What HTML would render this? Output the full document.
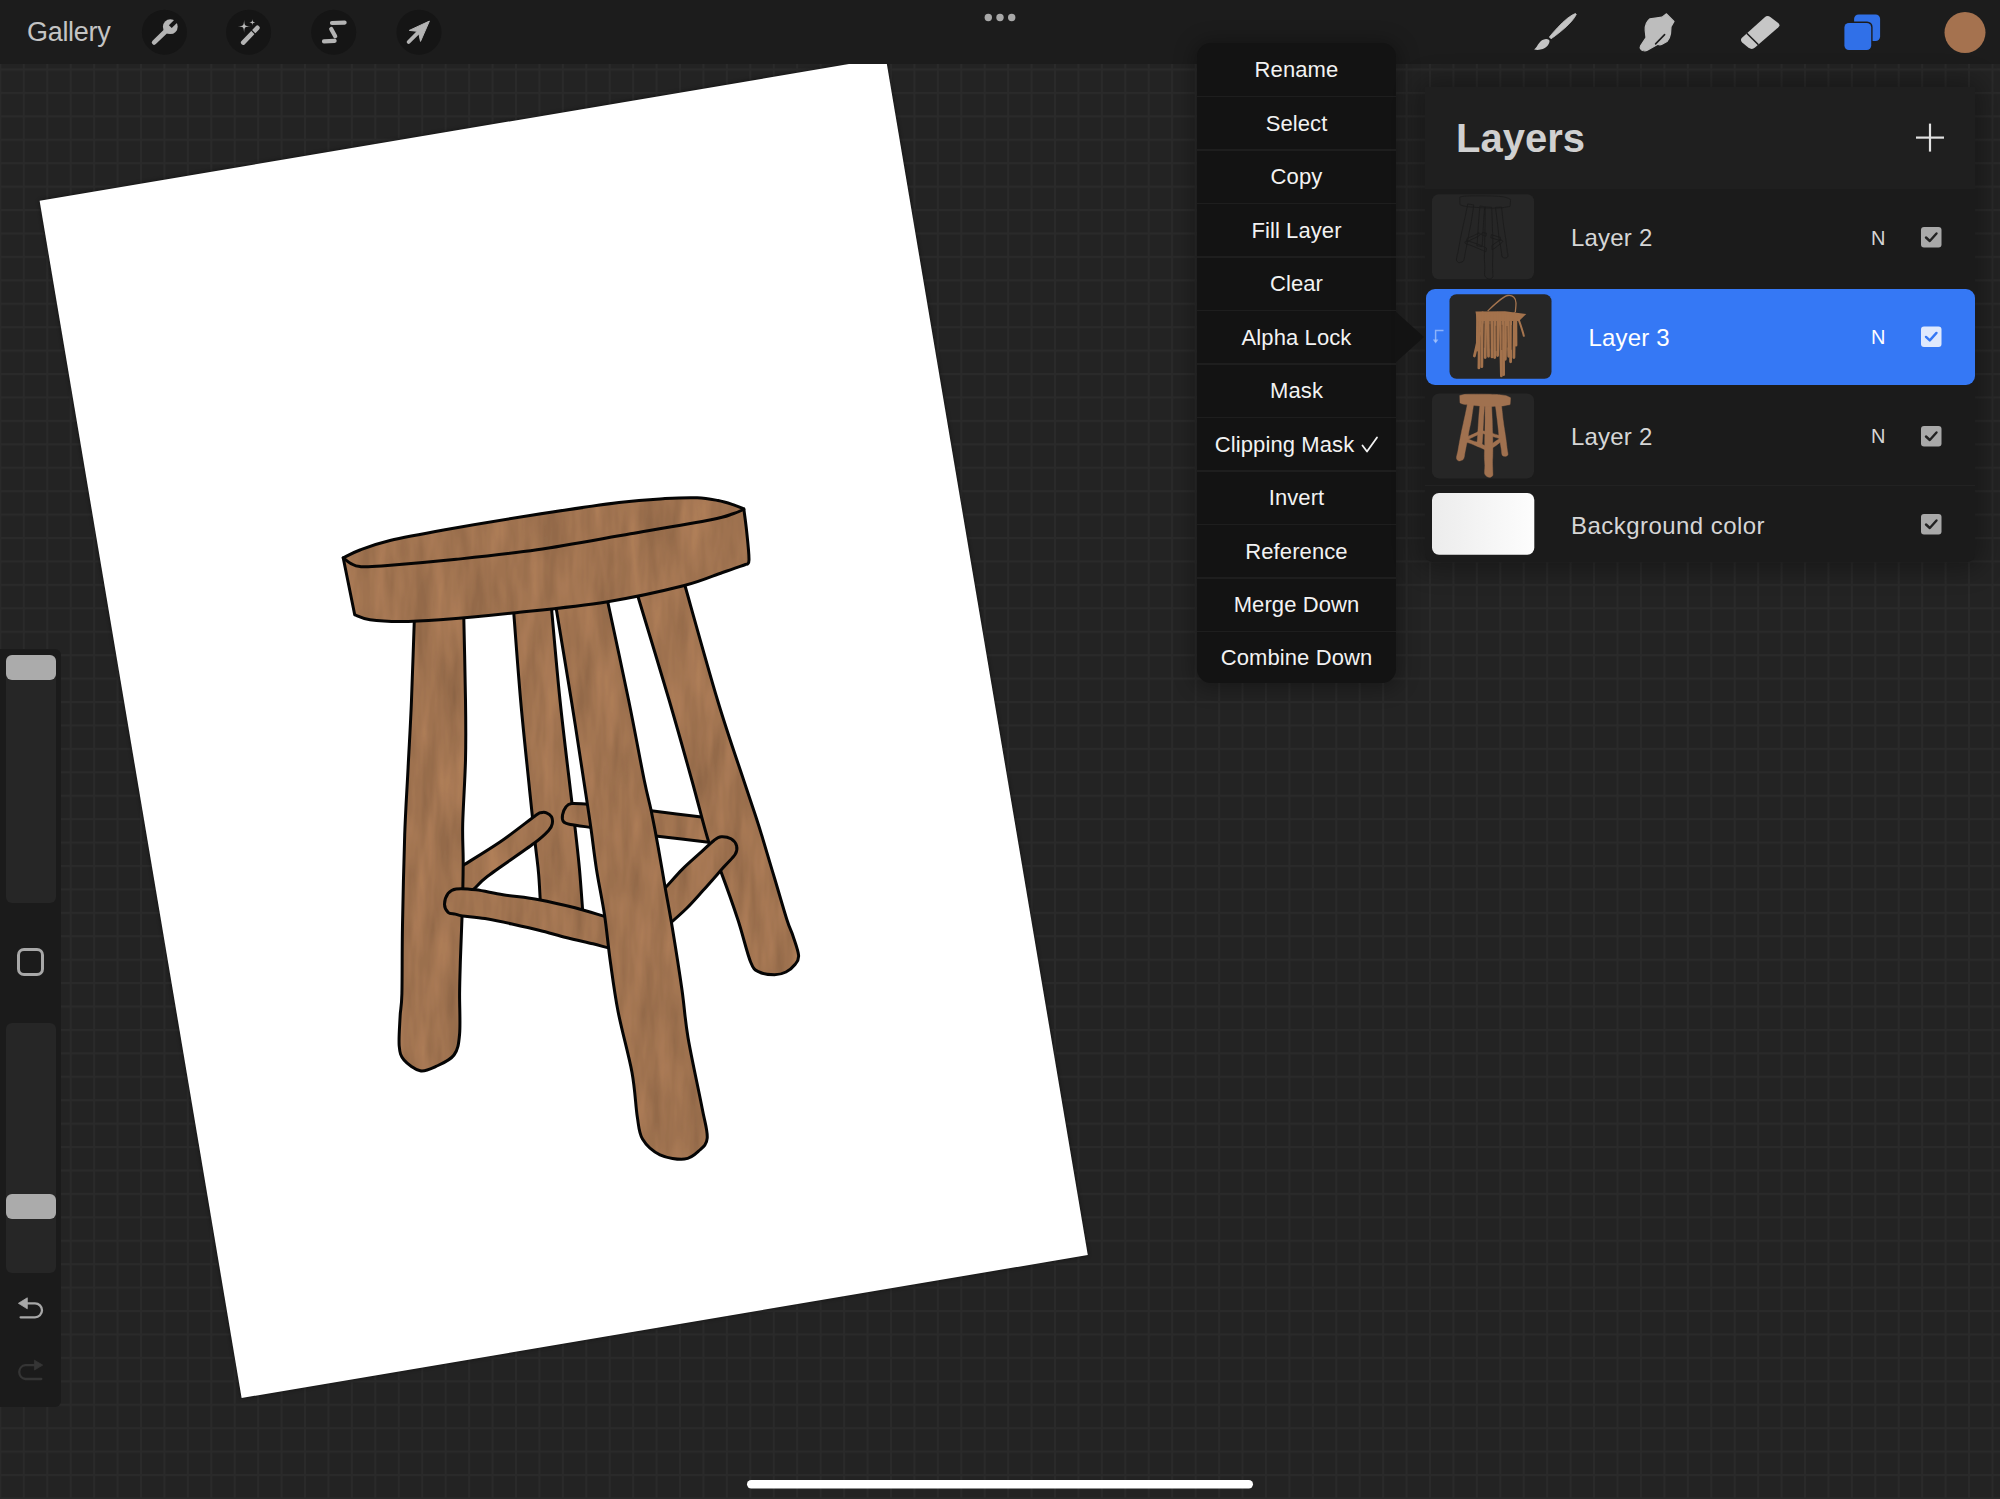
<!DOCTYPE html>
<html><head><meta charset="utf-8">
<style>
html,body{margin:0;padding:0;}
body{width:2000px;height:1499px;overflow:hidden;position:relative;background:#232323;font-family:"Liberation Sans",sans-serif;}
.abs{position:absolute;}
svg.full{position:absolute;left:0;top:0;}
.t{position:absolute;white-space:nowrap;line-height:1;}
.mi{position:absolute;left:1197px;width:199px;text-align:center;color:#f2f2f2;font-size:22px;line-height:1;letter-spacing:0.1px;}
</style></head>
<body>
<svg class="full" width="2000" height="1499" viewBox="0 0 2000 1499">
  <defs>
    <pattern id="grid" patternUnits="userSpaceOnUse" x="-0.64" y="-1.78" width="23.437" height="23.425">
      <rect x="0" y="0" width="2" height="23.425" fill="#2a2a2a"/>
      <rect x="0" y="0" width="23.437" height="2" fill="#2a2a2a"/>
    </pattern>
    <filter id="blur4" x="-20%" y="-20%" width="140%" height="140%"><feGaussianBlur stdDeviation="4"/></filter>
    <filter id="woodtex" x="0" y="0" width="1" height="1" filterUnits="objectBoundingBox">
      <feTurbulence type="fractalNoise" baseFrequency="0.07 0.012" numOctaves="3" seed="11" result="n"/>
      <feColorMatrix in="n" type="matrix" values="1 0 0 0 0  1 0 0 0 0  1 0 0 0 0  0 0 0 0 1" result="g"/>
      <feComposite in="SourceGraphic" in2="g" operator="arithmetic" k1="0.6" k2="0.7" k3="0" k4="0"/>
    </filter>
    <pattern id="woodpat" patternUnits="userSpaceOnUse" x="330" y="480" width="500" height="720">
      <rect x="0" y="0" width="500" height="720" fill="#a07350" filter="url(#woodtex)"/>
    </pattern>
    <filter id="blur2" x="-20%" y="-20%" width="140%" height="140%"><feGaussianBlur stdDeviation="2"/></filter>
  </defs>
  <rect width="2000" height="1499" fill="url(#grid)"/>
  <!-- paper shadow -->
  <polygon points="39.6,200.8 885.8,57.8 1087.8,1255 241.6,1398" fill="#000" opacity="0.5" filter="url(#blur2)"/>
  <!-- paper -->
  <polygon points="39.6,200.8 885.8,57.8 1087.8,1255 241.6,1398" fill="#fff"/>
  <defs><g id="stoolshapes"><path id="leg2" d="M512.8,600.0 C514.1,616.7 517.8,668.3 520.6,700.0 C523.4,731.7 527.2,765.9 529.6,790.0 C532.0,814.1 533.8,830.2 535.3,844.4 C536.8,858.6 537.8,863.2 538.7,875.0 C539.7,886.8 540.6,908.3 541.0,915.0 C548.0,915.0 576.0,915.0 583.0,915.0 C582.4,907.4 580.8,884.0 579.5,869.4 C578.2,854.8 576.5,840.6 575.0,827.4 C573.5,814.2 572.9,811.2 570.4,790.0 C567.9,768.8 563.3,731.7 560.0,700.0 C556.7,668.3 552.3,616.7 550.8,600.0 C544.5,600.0 519.1,600.0 512.8,600.0 Z"/><path id="s3a" d="M600.0,804.5 C597.9,804.5 592.1,804.4 587.4,804.2 C582.7,804.1 575.2,803.1 571.6,803.6 C568.0,804.1 567.4,805.1 565.9,807.0 C564.4,808.9 562.9,812.5 562.5,815.0 C562.1,817.5 562.3,820.2 563.6,821.8 C564.9,823.4 565.9,823.6 570.4,824.5 C574.9,825.4 585.9,826.7 590.8,827.4 C595.7,828.1 598.5,828.3 600.0,828.5 C600.0,824.5 600.0,808.5 600.0,804.5 Z"/><path id="s3b" d="M640.0,810.0 C641.9,810.1 640.9,809.6 651.2,810.8 C661.5,812.0 691.0,815.8 701.6,817.1 C712.2,818.4 712.8,818.3 715.0,818.5 C715.2,822.7 715.8,839.3 716.0,843.5 C714.8,843.3 718.7,843.5 708.6,842.3 C698.5,841.0 666.8,837.4 655.4,836.0 C644.0,834.6 642.6,834.3 640.0,834.0 C640.0,830.0 640.0,814.0 640.0,810.0 Z"/><path id="leg4" d="M636.0,590.0 C641.5,608.3 659.8,668.3 669.1,700.0 C678.4,731.7 685.2,756.4 691.8,780.0 C698.4,803.6 703.7,826.2 708.6,841.6 C713.5,857.0 716.3,859.3 721.2,872.4 C726.1,885.5 733.1,905.1 738.0,920.0 C742.9,934.9 747.1,953.4 750.6,962.0 C754.1,970.6 755.0,969.8 759.0,971.9 C763.0,974.0 770.0,974.7 774.5,974.7 C779.0,974.7 782.6,973.7 786.0,972.0 C789.4,970.3 792.9,967.2 795.0,964.5 C797.1,961.8 798.9,960.2 798.6,955.5 C798.3,950.8 794.9,941.9 793.0,936.0 C791.1,930.1 790.1,929.7 787.0,920.0 C783.9,910.3 778.5,891.3 774.5,878.0 C770.5,864.7 766.2,850.2 763.2,840.2 C760.2,830.2 759.5,827.8 756.2,817.8 C752.9,807.8 750.1,799.6 743.6,780.0 C737.1,760.4 727.5,733.3 717.5,700.0 C707.5,666.7 689.1,600.0 683.4,580.0 C675.5,581.7 643.9,588.3 636.0,590.0 Z"/><path id="s1" d="M455.0,870.0 C456.5,869.1 456.3,869.6 463.8,864.9 C471.3,860.2 488.1,850.1 500.0,842.0 C511.9,833.9 528.2,820.9 535.0,816.0 C541.8,811.1 538.6,813.3 540.5,812.8 C542.4,812.3 544.7,812.1 546.5,812.8 C548.3,813.5 550.5,815.0 551.5,816.8 C552.5,818.6 552.7,821.3 552.3,823.5 C551.9,825.7 552.0,826.7 549.0,830.0 C546.0,833.3 544.3,835.6 534.1,843.3 C523.9,851.0 497.8,868.5 487.6,876.2 C477.4,884.0 478.3,885.8 472.9,889.8 C467.5,893.8 458.0,898.3 455.0,900.0 C455.0,895.0 455.0,875.0 455.0,870.0 Z"/><path id="s4" d="M660.0,892.0 C660.9,891.3 661.5,891.5 665.2,887.8 C668.9,884.1 676.4,875.2 682.0,869.6 C687.6,864.0 693.4,859.1 698.8,854.2 C704.2,849.3 710.5,843.1 714.2,840.2 C717.9,837.3 718.4,836.9 721.2,836.7 C724.0,836.5 728.4,837.3 731.0,838.8 C733.6,840.3 735.9,843.2 736.6,845.8 C737.3,848.4 737.3,850.7 735.2,854.2 C733.1,857.7 729.4,860.7 724.0,866.8 C718.6,872.9 709.3,883.6 703.0,890.6 C696.7,897.6 692.4,902.7 686.2,908.8 C680.0,914.9 669.4,924.0 666.0,927.0 C665.0,921.2 661.0,897.8 660.0,892.0 Z"/><path id="leg1" d="M415.0,600.0 C414.4,616.7 412.6,672.1 411.5,700.0 C410.4,727.9 409.2,745.0 408.1,767.5 C407.0,790.0 405.6,808.8 404.7,835.0 C403.8,861.2 403.0,898.5 402.5,925.0 C402.0,951.5 402.3,978.5 401.9,993.8 C401.5,1009.0 400.5,1007.8 400.1,1016.5 C399.7,1025.2 398.6,1038.8 399.2,1046.0 C399.9,1053.2 400.5,1055.9 404.0,1060.0 C407.5,1064.1 414.9,1069.7 420.2,1070.8 C425.6,1071.8 430.4,1069.0 436.0,1066.4 C441.6,1063.8 450.1,1060.4 454.0,1055.0 C457.9,1049.6 458.7,1044.2 459.6,1034.0 C460.5,1023.8 459.5,1006.1 459.6,993.8 C459.7,981.4 460.0,973.2 460.4,960.0 C460.8,946.8 461.6,930.8 462.1,914.8 C462.6,898.8 463.1,878.8 463.2,863.7 C463.3,848.6 462.3,841.3 462.7,824.0 C463.1,806.7 465.0,780.7 465.5,760.0 C466.0,739.3 465.9,726.7 465.5,700.0 C465.1,673.3 463.8,616.7 463.4,600.0 C455.3,600.0 423.1,600.0 415.0,600.0 Z"/><path id="s2" d="M448.1,893.4 C450.1,890.8 451.6,889.5 456.2,888.9 C460.8,888.3 468.2,888.8 476.0,889.8 C483.8,890.8 492.5,893.1 503.0,894.8 C513.5,896.4 527.0,897.5 539.0,899.7 C551.0,901.9 564.0,905.0 575.0,907.8 C586.0,910.6 597.2,914.2 604.7,916.4 C612.2,918.6 617.5,920.2 620.0,921.0 C620.0,925.8 620.0,945.2 620.0,950.0 C618.0,949.6 612.8,948.9 608.3,947.9 C603.8,946.9 600.0,945.5 593.0,943.8 C586.0,942.1 575.0,939.8 566.0,937.5 C557.0,935.2 548.0,932.5 539.0,930.3 C530.0,928.0 521.0,926.0 512.0,924.0 C503.0,922.0 493.2,920.0 485.0,918.6 C476.8,917.2 467.4,916.6 462.5,915.9 C457.6,915.1 457.7,914.7 455.3,914.1 C452.9,913.5 449.9,913.9 448.1,912.3 C446.3,910.6 444.5,907.4 444.5,904.2 C444.5,901.1 446.2,896.0 448.1,893.4 Z"/><path id="leg3" d="M554.8,600.0 C557.5,616.7 566.2,668.3 571.3,700.0 C576.4,731.7 582.0,768.8 585.2,790.0 C588.5,811.2 588.9,814.2 590.8,827.4 C592.7,840.6 594.2,854.8 596.5,869.4 C598.8,884.0 602.2,899.7 604.5,914.8 C606.8,929.9 607.9,943.9 610.1,960.0 C612.4,976.1 614.4,992.5 618.0,1011.2 C621.6,1030.0 628.8,1055.0 632.0,1072.5 C635.2,1090.0 635.5,1105.2 637.2,1116.2 C639.0,1127.3 638.7,1132.6 642.5,1139.0 C646.3,1145.4 653.0,1151.4 660.0,1154.8 C667.0,1158.1 678.1,1159.7 684.5,1159.1 C690.9,1158.5 694.7,1154.8 698.5,1151.2 C702.3,1147.8 706.7,1145.4 707.2,1138.1 C707.8,1130.8 705.2,1124.3 702.0,1107.5 C698.8,1090.7 691.3,1057.1 688.0,1037.5 C684.7,1017.9 684.6,1008.4 682.0,990.0 C679.4,971.6 675.0,944.0 672.2,927.0 C669.4,910.0 667.5,901.1 665.2,887.8 C662.9,874.5 660.5,860.0 658.2,847.2 C655.9,834.4 653.5,822.0 651.2,810.8 C648.9,799.6 648.0,798.5 644.2,780.0 C640.4,761.5 634.9,730.8 628.6,700.0 C622.3,669.2 610.0,612.5 606.3,595.0 C597.7,595.8 563.4,599.2 554.8,600.0 Z"/><path id="seat" d="M343.2,557.8 C346.0,556.5 352.2,552.9 360.0,550.0 C367.8,547.1 375.8,543.9 390.0,540.5 C404.2,537.1 421.7,533.9 445.0,529.7 C468.3,525.5 501.0,520.0 530.0,515.5 C559.0,511.0 596.5,505.4 619.0,502.6 C641.5,499.8 652.0,499.4 665.0,498.6 C678.0,497.8 688.4,497.5 697.2,497.8 C706.0,498.1 712.0,499.4 718.0,500.5 C724.0,501.6 728.7,503.2 733.0,504.6 C737.3,506.0 742.0,508.0 743.8,508.7 C744.2,512.2 745.6,521.5 746.5,530.0 C747.4,538.5 749.2,554.2 749.0,560.0 C748.8,565.8 746.1,563.8 745.5,564.5 C741.7,565.8 732.9,569.0 722.5,572.5 C712.1,576.0 702.8,580.9 683.4,585.8 C664.0,590.7 634.7,597.4 606.3,601.9 C577.9,606.4 540.5,610.0 512.8,613.0 C485.1,616.0 458.8,618.4 440.0,619.8 C421.2,621.2 411.7,621.6 400.0,621.6 C388.3,621.6 377.6,620.9 370.0,619.8 C362.4,618.7 357.2,615.6 354.7,614.8 C352.8,605.3 345.1,567.3 343.2,557.8 Z"/></g><path id="stoolinner" d="M343.2,557.8 C344.5,558.8 348.2,562.1 351.0,563.6 C353.8,565.1 354.9,566.2 360.0,566.6 C365.1,567.0 365.6,567.2 381.7,566.0 C397.8,564.8 430.6,562.0 456.5,559.3 C482.4,556.6 508.0,554.0 537.0,549.8 C566.0,545.5 601.5,538.8 630.5,533.8 C659.5,528.8 693.9,523.0 711.0,519.7 C728.1,516.4 727.5,515.5 733.0,513.8 C738.5,512.1 742.0,510.1 743.8,509.3"/></defs><g><g fill="url(#woodpat)" stroke="#050505" stroke-width="3" stroke-linejoin="round"><use href="#stoolshapes"/></g><use href="#stoolinner" fill="none" stroke="#050505" stroke-width="3" stroke-linecap="round"/></g>
</svg>

<!-- top bar -->
<div class="abs" style="left:0;top:0;width:2000px;height:64px;background:#1c1c1c;"></div>
<div class="t" style="left:27px;top:19px;font-size:27px;letter-spacing:-0.3px;color:#c4c4c4;">Gallery</div>

<svg class="full" width="2000" height="1499" viewBox="0 0 2000 1499" style="pointer-events:none">
  <!-- toolbar circles -->
  <g fill="#151515">
    <circle cx="164.4" cy="32.2" r="22.5"/>
    <circle cx="248.6" cy="32.2" r="22.5"/>
    <circle cx="333.7" cy="32.2" r="22.5"/>
    <circle cx="419" cy="32.2" r="22.5"/>
  </g>
  <!-- wrench -->
  <line x1="154.2" y1="42.4" x2="167" y2="30" stroke="#b4b4b4" stroke-width="4.8" stroke-linecap="round"/>
  <circle cx="170.3" cy="26.7" r="7.4" fill="#b4b4b4"/>
  <line x1="170.3" y1="26.7" x2="178" y2="19" stroke="#151515" stroke-width="4"/>
  <!-- wand -->
  <g stroke="#b4b4b4" stroke-width="4.6" stroke-linecap="round">
    <line x1="243.2" y1="42.6" x2="257.4" y2="27.8"/>
  </g>
  <path d="M244.10,19.90 C244.60,25.80 244.60,25.80 250.50,26.30 C244.60,26.80 244.60,26.80 244.10,32.70 C243.60,26.80 243.60,26.80 237.70,26.30 C243.60,25.80 243.60,25.80 244.10,19.90 Z" fill="#bababa"/>
  <path d="M252.40,19.10 C252.75,22.05 252.75,22.05 255.70,22.40 C252.75,22.75 252.75,22.75 252.40,25.70 C252.05,22.75 252.05,22.75 249.10,22.40 C252.05,22.05 252.05,22.05 252.40,19.10 Z" fill="#bababa"/>
  <line x1="250.6" y1="29.4" x2="256" y2="34.8" stroke="#151515" stroke-width="1.3"/>
  <!-- selection S -->
  <g stroke="#b4b4b4" stroke-width="4.2" stroke-linecap="round" fill="none">
    <path d="M332,23 L344.6,22.6"/>
    <path d="M331.2,29 L335.2,36.2"/>
    <path d="M324,41.4 L334.6,40.8"/>
  </g>
  <!-- transform arrow -->
  <line x1="408.6" y1="42" x2="418" y2="32.6" stroke="#b4b4b4" stroke-width="3.8" stroke-linecap="round"/>
  <path d="M429.4,21.1 L409.3,30.4 L418.4,31.4 L420.5,41.4 Z" fill="#b4b4b4" stroke="#b4b4b4" stroke-width="1" stroke-linejoin="round"/>
  <!-- brush -->
  <path d="M1551.02,38.78 L1555.35,35.69 L1560.90,31.33 L1566.25,26.75 L1571.18,21.73 L1574.49,17.54 L1576.31,14.34 L1575.49,13.46 L1572.17,15.06 L1567.77,18.07 L1562.42,22.65 L1557.49,27.67 L1552.76,32.91 L1549.38,37.02 Z" fill="#c4c4c4" stroke="#c4c4c4" stroke-width="0.8" stroke-linejoin="round"/>
  <path d="M1546,39.1 C1548,39 1550,40 1549.5,41.8 C1549,44 1548,45.5 1546.5,46.8 C1544,49 1540,50.6 1534.1,49.6 C1536.5,47.5 1537.5,45 1538.8,43.4 C1540.5,41 1543,39.3 1546,39.1 Z" fill="#c4c4c4"/>
  <!-- smudge -->
  <path d="M1646,37.5 L1645.2,30.4 C1645,26 1647,21 1650,18.8 L1662,17.2 L1666.5,13.8 L1674,21.4 L1671,26.6 L1670.5,33.6 C1670,37 1668.5,40 1667,41.5 L1662,44.3 C1660.5,45 1659,45 1657.9,44.2 L1647.3,50.2 C1645.5,51.1 1642.5,51 1641.2,49.6 C1640,48.3 1640,46.8 1640.6,45.8 Z" fill="#bdbdbd" stroke="#bdbdbd" stroke-width="1.2" stroke-linejoin="round"/>
  <line x1="1664.6" y1="34.6" x2="1655.6" y2="43.9" stroke="#1c1c1c" stroke-width="1.6" stroke-linecap="round"/>
  <!-- eraser -->
  <path d="M1742,37.8 L1764.5,17.4 Q1767.4,14.8 1770.3,17 L1778.2,23 Q1780.6,25 1778.4,27.2 L1755,47.6 Q1752,50.2 1748.5,47.8 L1742.2,42.4 Q1739.8,40 1742,37.8 Z" fill="#c6c6c6"/>
  <line x1="1746.8" y1="33.2" x2="1758.4" y2="44.8" stroke="#1c1c1c" stroke-width="1.6"/>
  <!-- dots -->
  <g fill="#a8a8a8">
    <circle cx="988.3" cy="17.5" r="3.7"/>
    <circle cx="1000" cy="17.5" r="3.7"/>
    <circle cx="1011.7" cy="17.5" r="3.7"/>
  </g>
  <!-- color swatch -->
  <circle cx="1965" cy="32.5" r="20.5" fill="#a5724f"/>
  <!-- layers icon -->
  <rect x="1854.1" y="14.4" width="26" height="26.7" rx="4.5" fill="#3070e8"/>
  <rect x="1843" y="21.5" width="29.6" height="30" rx="5.5" fill="#1c1c1c"/>
  <rect x="1844.4" y="22.9" width="26.8" height="27.1" rx="4.5" fill="#3070e8"/>

  <!-- home indicator -->
  <rect x="747" y="1480" width="506" height="8.4" rx="4.2" fill="#fff"/>
</svg>

<!-- left sidebar -->
<div class="abs" style="left:0;top:649px;width:61px;height:758px;background:#1b1b1b;border-radius:0 6px 6px 0;"></div>
<div class="abs" style="left:6px;top:655px;width:50px;height:248px;background:#262626;border-radius:6px;"></div>
<div class="abs" style="left:6px;top:655px;width:50px;height:25px;background:#ababab;border-radius:6px;"></div>
<div class="abs" style="left:6px;top:1023px;width:50px;height:250px;background:#262626;border-radius:6px;"></div>
<div class="abs" style="left:6px;top:1194px;width:50px;height:25px;background:#ababab;border-radius:6px;"></div>
<div class="abs" style="left:17px;top:948px;width:21.4px;height:22px;border:3px solid #a8a8a8;border-radius:7px;"></div>

<svg class="abs" style="left:0;top:1280px" width="61" height="110" viewBox="0 1280 61 110">
  <path d="M26.9,1303.3 H35 A7,7 0 0 1 35,1317.3 H20.6" fill="none" stroke="#a8a8a8" stroke-width="2.3" stroke-linecap="round"/>
  <path d="M18.4,1303.3 L27.3,1297.8 L27.3,1308.8 Z" fill="#a8a8a8" stroke="#a8a8a8" stroke-width="0.8" stroke-linejoin="round"/>
  <path d="M35,1365.1 H25.4 A7,7 0 0 0 25.4,1379 H41.3" fill="none" stroke="#353535" stroke-width="2.3" stroke-linecap="round"/>
  <path d="M42.7,1365.1 L34.4,1360.2 L34.4,1370 Z" fill="#353535" stroke="#353535" stroke-width="0.8" stroke-linejoin="round"/>
</svg>
<!-- menu -->
<div class="abs" style="left:1197px;top:43px;width:199px;height:640px;background:#131313;border-radius:14px;box-shadow:0 2px 20px 4px rgba(0,0,0,0.3);"></div>
<div class="mi" style="top:59.20px">Rename</div><div class="mi" style="top:112.68px">Select</div><div class="mi" style="top:166.16px">Copy</div><div class="mi" style="top:219.64px">Fill Layer</div><div class="mi" style="top:273.12px">Clear</div><div class="mi" style="top:326.60px">Alpha Lock</div><div class="mi" style="top:380.08px">Mask</div><div class="mi" style="top:433.56px;"><span style="position:relative;left:-12px">Clipping Mask</span></div><svg class="abs" style="left:1360px;top:436px" width="20" height="18"><path d="M2.5,9.5 L7,15.5 L17,1.5" fill="none" stroke="#f2f2f2" stroke-width="1.8" stroke-linecap="round" stroke-linejoin="round"/></svg><div class="mi" style="top:487.04px">Invert</div><div class="mi" style="top:540.52px">Reference</div><div class="mi" style="top:594.00px">Merge Down</div><div class="mi" style="top:647.48px">Combine Down</div><div class="abs" style="left:1197px;top:95.7px;width:199px;height:1.5px;background:#1e1e1e"></div><div class="abs" style="left:1197px;top:149.2px;width:199px;height:1.5px;background:#1e1e1e"></div><div class="abs" style="left:1197px;top:202.6px;width:199px;height:1.5px;background:#1e1e1e"></div><div class="abs" style="left:1197px;top:256.1px;width:199px;height:1.5px;background:#1e1e1e"></div><div class="abs" style="left:1197px;top:309.6px;width:199px;height:1.5px;background:#1e1e1e"></div><div class="abs" style="left:1197px;top:363.1px;width:199px;height:1.5px;background:#1e1e1e"></div><div class="abs" style="left:1197px;top:416.6px;width:199px;height:1.5px;background:#1e1e1e"></div><div class="abs" style="left:1197px;top:470.0px;width:199px;height:1.5px;background:#1e1e1e"></div><div class="abs" style="left:1197px;top:523.5px;width:199px;height:1.5px;background:#1e1e1e"></div><div class="abs" style="left:1197px;top:577.0px;width:199px;height:1.5px;background:#1e1e1e"></div><div class="abs" style="left:1197px;top:630.5px;width:199px;height:1.5px;background:#1e1e1e"></div>

<!-- layers panel -->
<div class="abs" style="left:1425px;top:87px;width:550px;height:475px;border-radius:10px;box-shadow:0 0 24px 8px rgba(0,0,0,0.3);"></div>
<div class="abs" style="left:1425px;top:87px;width:550px;height:102px;background:#1f1f1f;"></div>
<div class="abs" style="left:1425px;top:189px;width:550px;height:373px;background:#1b1b1b;border-radius:0 0 8px 8px;"></div>
<div class="t" style="left:1456px;top:118px;font-size:40px;font-weight:bold;color:#d0d0d0;">Layers</div>
<div class="abs" style="left:1425.7px;top:288.5px;width:549.5px;height:96.4px;background:#3578f5;border-radius:9px;"></div>
<svg class="full" width="2000" height="1499" viewBox="0 0 2000 1499">
  <!-- menu arrow -->
  <polygon points="1395,311 1424,337 1395,363" fill="#131313"/>
  <!-- plus -->
  <g stroke="#e2e2e2" stroke-width="2.2"><line x1="1916" y1="137.6" x2="1944" y2="137.6"/><line x1="1930" y1="123.6" x2="1930" y2="151.6"/></g>
  <!-- separators -->
  <rect x="1425" y="485" width="550" height="1.2" fill="#222"/>
  <!-- thumbnails -->
  <rect x="1432" y="194.3" width="102" height="85" rx="7" fill="#262626"/>
  <rect x="1449.5" y="294.3" width="102" height="84.5" rx="7" fill="#262626"/>
  <rect x="1432" y="393.4" width="102" height="85" rx="7" fill="#262626"/>
  <defs><linearGradient id="wg" x1="0" x2="1" y1="0" y2="0"><stop offset="0" stop-color="#ececec"/><stop offset="1" stop-color="#fdfdfd"/></linearGradient></defs>
  <rect x="1432" y="493" width="102.3" height="61.8" rx="7" fill="url(#wg)"/>
  <g transform="translate(1410.4,329.5) scale(0.126) rotate(9.58,570,830)" fill="#a0714f" stroke="#a0714f" stroke-width="3"><use href="#stoolshapes"/></g><g transform="translate(1410.4,131.2) scale(0.126) rotate(9.58,570,830)" fill="none" stroke="#1c1c1c" stroke-width="7"><use href="#stoolshapes"/></g><g><path d="M1475.5,311.5 L1505,311.2 L1526.3,314 L1519,321 L1477,321 Z" fill="#a3724c"/><g stroke="#a3724c" stroke-width="2.8" stroke-linecap="round"><line x1="1477.6" y1="313.7" x2="1477.3" y2="350.0"/><line x1="1479.8" y1="314.8" x2="1478.9" y2="367.9"/><line x1="1482.6" y1="313.0" x2="1481.8" y2="366.7"/><line x1="1485.8" y1="313.7" x2="1485.2" y2="357.5"/><line x1="1488.3" y1="315.5" x2="1488.5" y2="356.3"/><line x1="1491.6" y1="313.5" x2="1492.0" y2="356.9"/><line x1="1494.7" y1="314.6" x2="1494.7" y2="357.5"/><line x1="1497.8" y1="313.2" x2="1497.6" y2="355.6"/><line x1="1500.2" y1="313.9" x2="1501.4" y2="375.9"/><line x1="1503.3" y1="314.4" x2="1503.6" y2="374.7"/><line x1="1506.0" y1="315.1" x2="1505.3" y2="359.3"/><line x1="1507.9" y1="315.4" x2="1508.7" y2="356.3"/><line x1="1510.7" y1="315.6" x2="1510.6" y2="361.8"/><line x1="1514.6" y1="313.7" x2="1513.9" y2="357.5"/><line x1="1515.8" y1="314.9" x2="1516.0" y2="345.2"/><line x1="1474.4" y1="356" x2="1479.7" y2="333"/></g><g stroke="#5a3f2c" stroke-width="1.1" opacity="0.55"><line x1="1484.0" y1="323.5" x2="1483.9" y2="347.7"/><line x1="1490.0" y1="324.3" x2="1490.4" y2="348.5"/><line x1="1496.0" y1="325.7" x2="1496.4" y2="350.9"/><line x1="1502.0" y1="324.7" x2="1501.7" y2="349.9"/><line x1="1507.0" y1="325.9" x2="1507.4" y2="347.6"/><line x1="1512.0" y1="324.9" x2="1511.7" y2="349.7"/></g><path d="M1487.7,311 C1495,304 1503,296 1508,295.5 C1513,295 1516,298 1516,303 C1516,307 1515.5,310 1515.3,312" fill="none" stroke="#a6754f" stroke-width="1.3"/><path d="M1518.4,318.8 C1521,326 1523,332 1524,336.6" fill="none" stroke="#a6754f" stroke-width="2"/></g>
  <!-- clip indicator -->
  <g stroke="#a9c6fb" stroke-width="1.5" fill="none" opacity="0.75"><path d="M1443.5,330.5 H1435.6 V342"/></g>
  <path d="M1432.8,339.5 L1435.6,343.6 L1438.4,339.5 Z" fill="#a9c6fb" opacity="0.75"/>
  <!-- checkboxes -->
  <g>
    <rect x="1921" y="227" width="20.5" height="20.5" rx="3" fill="#a9a9a9"/>
    <rect x="1921" y="326.4" width="20.5" height="20.5" rx="3" fill="#dfe9fd"/>
    <rect x="1921" y="426" width="20.5" height="20.5" rx="3" fill="#a9a9a9"/>
    <rect x="1921" y="514" width="20.5" height="20.5" rx="3" fill="#a9a9a9"/>
  </g>
  <g fill="none" stroke-width="2.4" stroke-linecap="round" stroke-linejoin="round">
    <path d="M1926,237.5 L1929.8,241 L1936.5,233.5" stroke="#222"/>
    <path d="M1926,336.9 L1929.8,340.4 L1936.5,332.9" stroke="#3578f5"/>
    <path d="M1926,436.5 L1929.8,440 L1936.5,432.5" stroke="#222"/>
    <path d="M1926,524.5 L1929.8,528 L1936.5,520.5" stroke="#222"/>
  </g>
</svg>
<div class="t" style="left:1571px;top:225.7px;font-size:24px;color:#d6d6d6;letter-spacing:0.2px;">Layer 2</div>
<div class="t" style="left:1588.4px;top:326.2px;font-size:24px;color:#ffffff;letter-spacing:0.2px;">Layer 3</div>
<div class="t" style="left:1571px;top:425.2px;font-size:24px;color:#d6d6d6;letter-spacing:0.2px;">Layer 2</div>
<div class="t" style="left:1571px;top:513.7px;font-size:24px;color:#d6d6d6;letter-spacing:0.45px;">Background color</div>
<div class="t" style="left:1871px;top:227.6px;font-size:20px;color:#d6d6d6;">N</div>
<div class="t" style="left:1871px;top:326.6px;font-size:20px;color:#ffffff;">N</div>
<div class="t" style="left:1871px;top:426.1px;font-size:20px;color:#d6d6d6;">N</div>
</body></html>
